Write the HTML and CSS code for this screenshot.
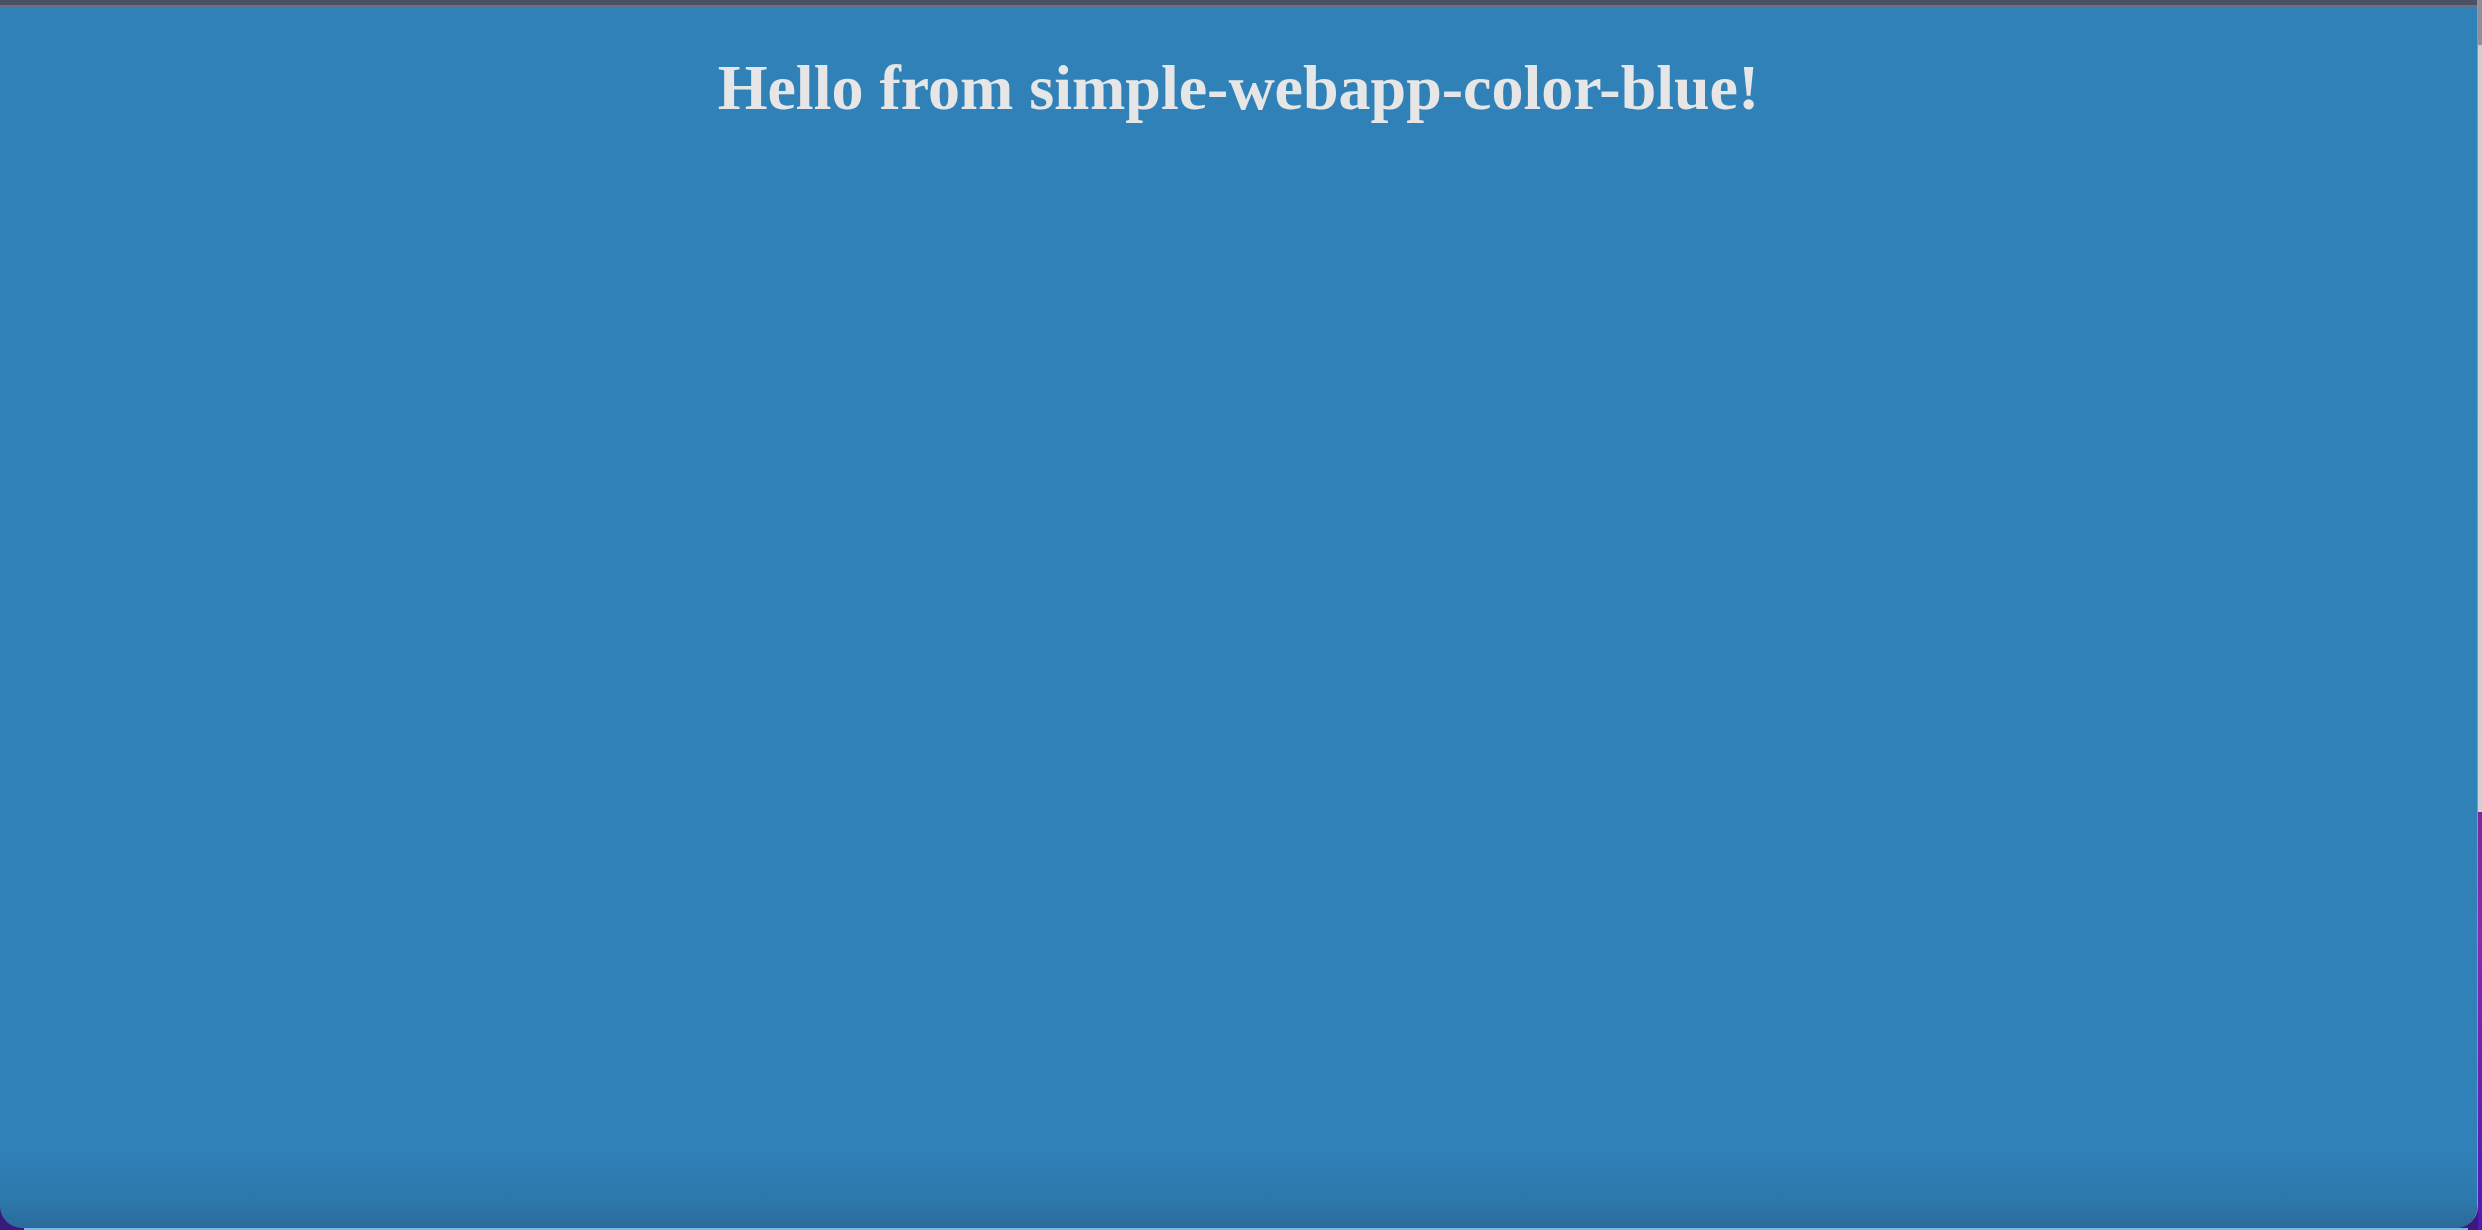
FILE: index.html
```html
<!DOCTYPE html>
<html lang="en">
<head>
<meta charset="utf-8">
<title>simple-webapp-color-blue</title>
<link rel="stylesheet" href="styles.css">
</head>
<body>
<div class="desktop">
  <div class="window-col">
    <div class="window">
      <div class="titlebar"></div>
      <div class="titleline"></div>
      <main class="content">
        <h1 class="greeting">Hello from simple-webapp-color-blue!</h1>
      </main>
    </div>
    <div class="dock-edge"></div>
  </div>
  <div class="side">
    <div class="side-top"></div>
    <div class="side-bottom"></div>
  </div>
</div>
</body>
</html>
```
FILE: styles.css
```css
html, body {
  margin: 0;
  padding: 0;
  height: 100%;
}
body {
  background: #3b1a7e;
  overflow: hidden;
}
.desktop {
  display: flex;
  width: 2482px;
  height: 1230px;
}
.window-col {
  width: 2478px;
  display: flex;
  flex-direction: column;
}
.window {
  height: 1228px;
  display: flex;
  flex-direction: column;
  border-radius: 0 0 22px 22px;
  overflow: hidden;
  border-right: 1px solid #8a9aa8;
  box-sizing: border-box;
}
.titlebar {
  height: 5px;
  background: #4a5163;
}
.titleline {
  height: 2px;
  background: #6d7082;
}
.content {
  flex: 1;
  background: linear-gradient(to bottom, #2f81b8 0, #2f81b8 calc(100% - 80px), #2d78ac calc(100% - 30px), #2a6b9c 100%);
  padding-top: 44px;
}
.greeting {
  margin: 0;
  font-family: "Liberation Serif", "Times New Roman", serif;
  font-weight: bold;
  font-size: 64px;
  line-height: normal;
  color: #e6e6e6;
  text-align: center;
}
.dock-edge {
  height: 2px;
  margin: 0 10px 0 24px;
  background: #79b9ea;
}
.side {
  width: 4px;
  display: flex;
  flex-direction: column;
}
.side-top {
  height: 812px;
  background: linear-gradient(to bottom, #8c8f98 0, #8c8f98 44px, #cfcfcf 46px, #d0d0d0 100%);
}
.side-bottom {
  flex: 1;
  background: linear-gradient(to bottom, #7a2a9e 0, #8a2aae 30%, #6a24b0 60%, #4a1eb0 100%);
}
```
